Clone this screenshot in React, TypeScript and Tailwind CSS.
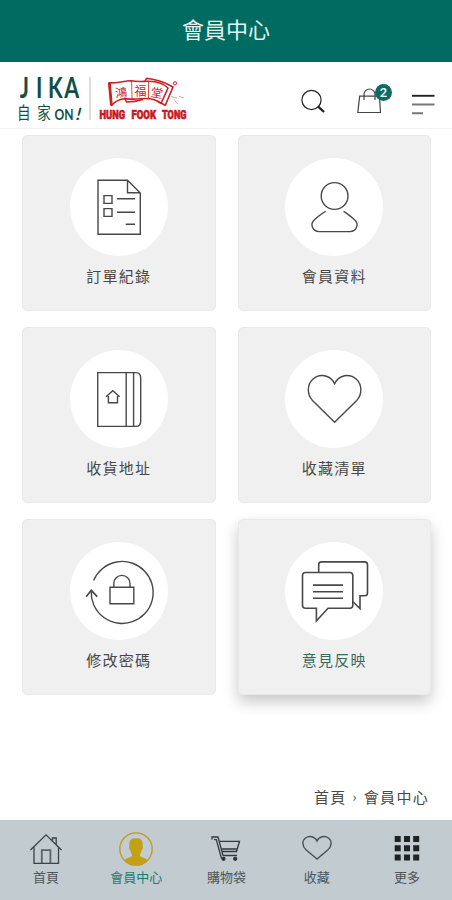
import React from "react";

type IconProps = { children: React.ReactNode };

function TileIcon({ children }: IconProps) {
  return (
    <svg width="98" height="98" viewBox="0 0 98 98" fill="none" stroke="#484848" strokeWidth="1.4">
      {children}
    </svg>
  );
}

const OrderIcon = () => (
  <TileIcon>
    <path d="M28 22.2H57.5L70.3 35V76.3H28Z M57.5 22.2V34.7H70.3" />
    <path d="M34 37.6H42V45.4H34Z M34 50.6H42V58.4H34Z M47 40.8H65 M47 54.3H65 M55.7 66.3H65" />
  </TileIcon>
);

const MemberIcon = () => (
  <TileIcon>
    <circle cx="49.6" cy="38" r="13.4" />
    <path d="M40.6 53.4C37 55.4 33.5 58.2 30 61.2C23.8 66.4 28 73.6 34 73.6H65C71 73.6 75.2 66.4 69 61.2C65.5 58.2 62.2 55.4 58.6 53.4" />
  </TileIcon>
);

const AddressIcon = () => (
  <TileIcon>
    <path d="M27.7 22.6H66C69 22.6 70.7 25 70.7 28V71C70.7 74.2 69 76.4 66 76.4H27.7Z M56.2 22.6V76.4 M63.6 22.6V76.4" />
    <path d="M38.4 46V52.8H47.5V46 M36 46.8L42.8 40.8L49.6 46.8" />
  </TileIcon>
);

const HeartIcon = () => (
  <TileIcon>
    <path d="M49.6 72.2L27.5 50.4C21.8 44.5 22 34.5 27.8 29.2C34.5 23.2 45.2 24.6 49.6 33.6C54 24.6 64.7 23.2 71.4 29.2C77.2 34.5 77.4 44.5 71.7 50.4Z" />
  </TileIcon>
);

const PasswordIcon = () => (
  <TileIcon>
    <path d="M23.6 38.4A31 31 0 1 1 21.2 49" />
    <path d="M16.2 54.7L21.2 48.3L27.2 54.7" strokeWidth="1.7" />
    <path d="M40 45.3H63.8V61.8H40Z M43.8 45.3V41.5A8.1 8.1 0 0 1 60 41.5V45.3" />
  </TileIcon>
);

const FeedbackIcon = () => (
  <TileIcon>
    <path d="M33.7 30.4V22.7Q33.7 19.9 36.5 19.9H79.7Q82.5 19.9 82.5 22.7V51Q82.5 53.8 79.7 53.8H75V66.6L67.7 59.5" strokeWidth="1.6" />
    <path d="M20.5 30.5H64.8Q67.8 30.5 67.8 33.5V63.2Q67.8 66.2 64.8 66.2H43L31.4 79V66.2H20.5Q17.5 66.2 17.5 63.2V33.5Q17.5 30.5 20.5 30.5Z" strokeWidth="1.6" />
    <path d="M28 43.1H58 M28 49.7H58 M28 56.3H58" strokeWidth="1.6" />
  </TileIcon>
);

const tiles = [
  { label: "訂單紀錄", Icon: OrderIcon },
  { label: "會員資料", Icon: MemberIcon },
  { label: "收貨地址", Icon: AddressIcon },
  { label: "收藏清單", Icon: HeartIcon },
  { label: "修改密碼", Icon: PasswordIcon },
  { label: "意見反映", Icon: FeedbackIcon, active: true },
];

function HungFookTong() {
  return (
    <svg width="92" height="66" viewBox="0 0 92 66" fill="none">
      <g stroke="#cf2027" strokeWidth="1.6" strokeLinejoin="round">
        <path d="M12 20.8C19 21.5 26 19 34.5 18.8C40 20 45 19.5 50 19.3C58 19 66 21 71 26L64 41.5C58 36 50 36 43 36.8C37 37.5 32 37 28 36.8C23 37 18 39.5 14.5 43.5Z" />
        <path d="M12.4 20.8L14.4 43.5" strokeWidth="2.8" />
        <path d="M34.6 19L35 37 M51.5 20L51.5 36.5" strokeWidth="0.8" />
        <path d="M48 19L49.5 16.3Q64 18 76 25L68.3 43.2L60 39 M28 37L29.5 40Q38 40 46 37.5" />
      </g>
      <g fill="#cf2027" fontFamily="'Noto Sans CJK TC', sans-serif" fontSize="12">
        <text x="18" y="35" transform="rotate(-5 24 30)">鴻</text>
        <text x="37.5" y="34">福</text>
        <text x="54" y="35.5" transform="rotate(10 60 30)">堂</text>
      </g>
      <circle cx="78" cy="21.3" r="1.6" stroke="#cf2027" strokeWidth="1" />
      <path d="M74 34.5L80 36M77 37.5L80.5 42M82 34.5L87 36" stroke="#e8a0a3" strokeWidth="1" />
      <g
        fill="#cb1720"
        stroke="#cb1720"
        strokeWidth="0.7"
        fontFamily="Roboto, sans-serif"
        fontSize="13.2"
        fontWeight="900"
      >
        <text x="2.5" y="57.3" textLength="25.5" lengthAdjust="spacingAndGlyphs">HUNG</text>
        <text x="34.5" y="57.3" textLength="24.5" lengthAdjust="spacingAndGlyphs">FOOK</text>
        <text x="65" y="57.3" textLength="24.5" lengthAdjust="spacingAndGlyphs">TONG</text>
      </g>
    </svg>
  );
}

function Logo() {
  return (
    <div className="flex h-[66px] items-start pl-[18px]">
      <svg width="65" height="66" viewBox="0 0 65 66" fill="#124f43">
        <text
          transform="translate(0 36) scale(.74 1)"
          x="2.4 24.2 40.5 62.5"
          fontFamily="Lato, sans-serif"
          fontWeight="700"
          fontSize="29"
        >
          JIKA
        </text>
        <g fontFamily="'Noto Sans CJK TC', sans-serif" fontSize="16.5">
          <text transform="translate(-1 57.2) scale(.82 1)">自</text>
          <text transform="translate(19.3 57.2) scale(.82 1)">家</text>
        </g>
        <text x="36.6" y="57.8" textLength="19" lengthAdjust="spacingAndGlyphs" fontFamily="Lato, sans-serif" fontSize="15.5" fontWeight="700">
          ON
        </text>
        <text transform="translate(57 57.8) skewX(-14)" fontFamily="Lato, sans-serif" fontSize="17" fontWeight="700">
          !
        </text>
      </svg>
      <div className="ml-[6px] mt-[15px] h-[43px] w-[2px] bg-[#dddddd]" />
      <div className="ml-[6px]">
        <HungFookTong />
      </div>
    </div>
  );
}

const navIcons = {
  home: (
    <svg width="34" height="34" viewBox="0 0 34 34" fill="none" stroke="#3c4347" strokeWidth="1.3">
      <path d="M1.5 18L17 2.8L32.5 18 M5 15V31.3H29.5V15 M23.5 8.5V6H27.2V12.5" />
      <path d="M12.8 31V18.2H21.4V31" strokeWidth="1.8" stroke="#5a6367" />
    </svg>
  ),
  member: (
    <svg width="34" height="34" viewBox="0 0 34 34" fill="none">
      <circle cx="17" cy="17" r="16.2" stroke="#bd9b20" strokeWidth="1.3" />
      <path
        fill="#c3a015"
        d="M17 6.2C20.5 6.2 23 7.2 23.6 10L23.6 14.5C24.4 15 23.8 17.8 22.8 18.3C22.3 20.5 21.2 22 20.8 23.2C21.5 25.6 26 25.3 28.3 28C25.4 31.3 21.5 33 17 33S8.6 31.3 5.7 28C8 25.3 12.5 25.6 13.2 23.2C12.8 22 11.7 20.5 11.2 18.3C10.2 17.8 9.6 15 10.4 14.5L10.4 10C11 7.2 13.5 6.2 17 6.2Z"
      />
    </svg>
  ),
  cart: (
    <svg width="30" height="34" viewBox="0 0 30 34" fill="none" stroke="#33393c" strokeWidth="1.3">
      <path d="M1 7.5V5H7L12 23.5H26 M3 7.7H5.3L10.5 26.5 M8 9.3H28.5L25.5 19.5H11 M11 17H26" />
      <circle cx="12.5" cy="26.8" r="1.5" fill="#202427" />
      <circle cx="24.2" cy="26.8" r="1.5" fill="#202427" />
    </svg>
  ),
  heart: (
    <svg width="32" height="34" viewBox="0 0 32 34" fill="none" stroke="#475056" strokeWidth="1.4">
      <path d="M16 27L5 17.8C1 14 1 8.5 4.5 6C8.3 3.3 14 4.5 16 9C18 4.5 23.7 3.3 27.5 6C31 8.5 31 14 27 17.8Z" />
    </svg>
  ),
  more: (
    <svg width="26" height="34" viewBox="0 0 26 34" fill="#202326">
      <path d="M.7 4h6v6h-6z M10 4h6v6h-6z M19.2 4h6v6h-6z M.7 13.2h6v6h-6z M10 13.2h6v6h-6z M19.2 13.2h6v6h-6z M.7 22.4h6v6h-6z M10 22.4h6v6h-6z M19.2 22.4h6v6h-6z" />
    </svg>
  ),
};

const nav = [
  { label: "首頁", icon: navIcons.home },
  { label: "會員中心", icon: navIcons.member, active: true },
  { label: "購物袋", icon: navIcons.cart },
  { label: "收藏", icon: navIcons.heart },
  { label: "更多", icon: navIcons.more },
];

export default function App() {
  return (
    <div className="flex h-[900px] w-[452px] flex-col overflow-hidden bg-white font-['Noto_Sans_CJK_TC',sans-serif]">
      <header className="flex h-[62px] shrink-0 items-center justify-center bg-[#006b60] pb-[6px] text-[22px] text-[#e5f4f1]">
        <h1 className="leading-none">會員中心</h1>
      </header>

      <div className="flex h-[67px] shrink-0 justify-between border-b border-[#f3f3f3]">
        <Logo />
        <div className="flex items-start">
          <svg className="mt-[27px]" width="26" height="27" viewBox="0 0 26 27" fill="none" stroke="#222">
            <circle cx="10.5" cy="11" r="9.6" strokeWidth="1.2" />
            <path d="M17 17.3L23 23" strokeWidth="2.4" />
          </svg>
          <div className="relative ml-[30px] mt-[20px]">
            <svg width="38" height="34" viewBox="0 0 38 34" fill="none" stroke="#444" strokeWidth="1.2">
              <path d="M2.7 14.2H22.5L23.5 30.5H.8Z M7 18V12.5A5.5 5.5 0 0 1 18 12.5V18" />
            </svg>
            <span className="absolute left-[18px] top-[2px] flex h-[17px] w-[17px] items-center justify-center rounded-full bg-[#0b6d61] font-['Roboto',sans-serif] text-[13px] font-medium leading-none text-white">
              2
            </span>
          </div>
          <svg className="ml-[16px] mr-[17px] mt-[31px]" width="24" height="24" viewBox="0 0 24 24">
            <path d="M1 2.8H23.5" stroke="#222" strokeWidth="1.9" />
            <path d="M1 11.5H23.5M1 20.2H12" stroke="#777" strokeWidth="1.9" />
          </svg>
        </div>
      </div>

      <main className="flex grow flex-col">
        <div className="grid grid-cols-2 gap-x-[22px] gap-y-4 pl-[22px] pr-[21px] pt-[6px]">
          {tiles.map(({ label, Icon, active }) => (
            <div
              key={label}
              className={`flex h-44 flex-col items-center rounded-[5px] border border-[#e9e9e9] bg-[#f0f0f0] pt-[22px] ${
                active ? "text-[#376b61] shadow-[0_7px_15px_rgba(0,0,0,0.22)]" : "text-[#484848]"
              }`}
            >
              <div className="h-[98px] w-[98px] rounded-full bg-white">
                <Icon />
              </div>
              <span className="mt-[12px] text-[15px] leading-4 tracking-[1.2px]">{label}</span>
            </div>
          ))}
        </div>
        <div className="mr-[23px] mt-auto flex h-[48px] items-center justify-end gap-[6px] text-[15px] leading-none tracking-[1.3px] text-[#484848]">
          <span>首頁</span>
          <span className="text-[13px]">›</span>
          <span>會員中心</span>
        </div>
      </main>

      <nav className="grid h-20 shrink-0 grid-cols-5 bg-[#c1cbd0] pl-[1px]">
        {nav.map(({ label, icon, active }) => (
          <div
            key={label}
            className={`flex flex-col items-center pt-[12px] text-[13px] leading-[14px] ${
              active ? "text-[#187e70]" : "text-[#4d565a]"
            }`}
          >
            {icon}
            <span className="mt-[4px]">{label}</span>
          </div>
        ))}
      </nav>
    </div>
  );
}
